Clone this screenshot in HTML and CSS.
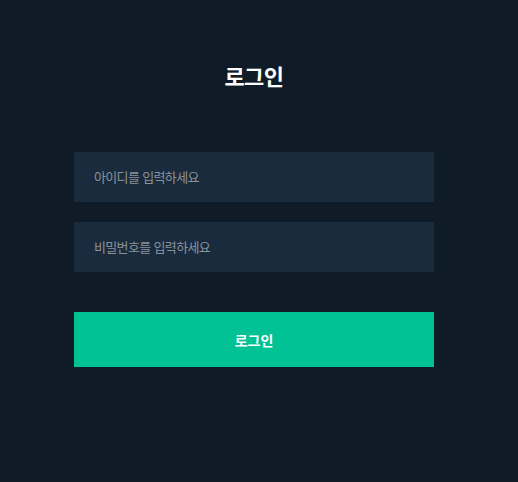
FILE: index.html
```
<!DOCTYPE html>
<html lang="ko">
<head>
    <meta charset="UTF-8">
    <meta name="viewport" content="width=device-width, initial-scale=1.0">
    <title>로그인</title>
    <link rel="stylesheet" href="styles.css">
</head>
<body>
    <div class="page">
        <form class="login">
            <h1 class="title">로그인</h1>
            <input type="text" class="field" placeholder="아이디를 입력하세요">
            <input type="password" class="field" placeholder="비밀번호를 입력하세요">
            <button type="button" class="submit">로그인</button>
        </form>
    </div>
</body>
</html>
```

FILE: styles.css
```
body{
    margin: 0;
    background-color: #0f1b26;
    font-family: "Noto Sans CJK KR", "Noto Sans", sans-serif;
}
.page{
    box-sizing: border-box;
    padding: 59px 10px 0px 0px;
}
.login{
    width: 360px;
    margin: 0 auto;
    display: flex;
    flex-direction: column;
}
.title{
    margin: 0px 0px 61px 0px;
    color: white;
    font-size: 22px;
    line-height: 32px;
    font-weight: 700;
    letter-spacing: -0.5px;
    text-align: center;
}
.field{
    box-sizing: border-box;
    width: 100%;
    height: 50px;
    margin-bottom: 20px;
    padding: 0px 20px 1px 20px;
    border: 0px;
    outline: none;
    background-color: #192b3c;
    color: white;
    font-family: inherit;
    font-size: 13px;
    letter-spacing: -0.05em;
}
.field::placeholder{
    color: #8b939a;
}
.submit{
    height: 55px;
    margin-top: 20px;
    border: 0px;
    background-color: #00c295;
    color: white;
    font-family: inherit;
    font-size: 14px;
    font-weight: 700;
}
```
